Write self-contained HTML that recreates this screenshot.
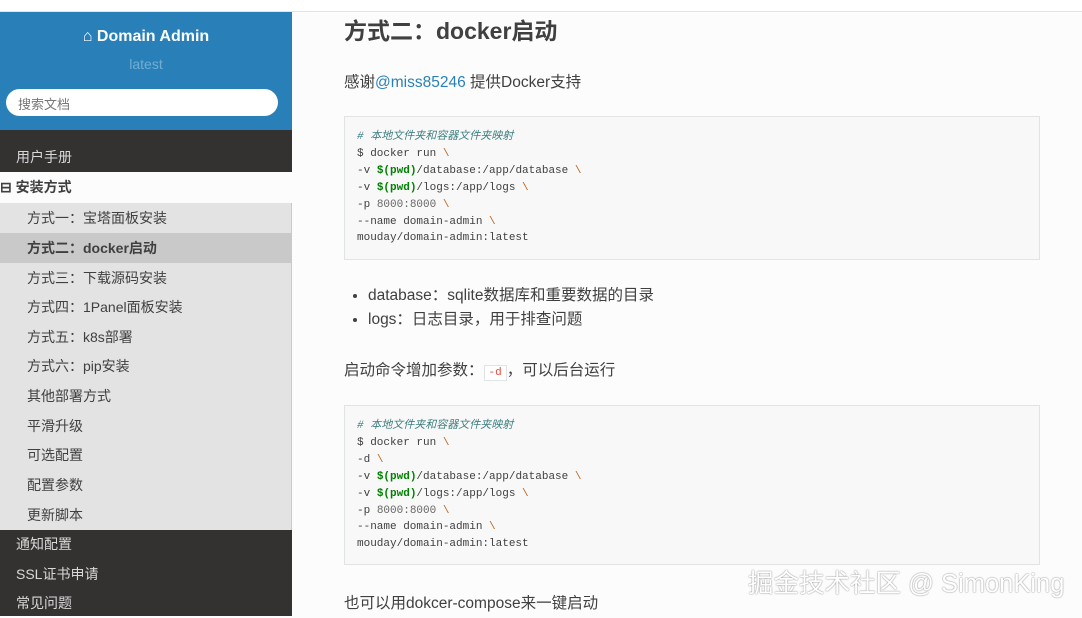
<!DOCTYPE html>
<html><head><meta charset="utf-8"><style>
*{margin:0;padding:0;box-sizing:border-box}
body{width:1082px;height:616px;overflow:hidden;background:#fcfcfc;font-family:"Liberation Sans","Noto Sans CJK SC",sans-serif;color:#404040;position:relative}
.top{position:absolute;left:0;top:0;width:1082px;height:12px;background:#fff;border-bottom:1px solid #e4e4e4}
.side{position:absolute;left:0;top:12px;width:292px;height:604px;background:#343131}
.blue{position:absolute;left:0;top:0;width:292px;height:118px;background:#2980b9;text-align:center}
.title{position:absolute;top:16px;width:100%;color:#fcfcfc;font-weight:bold;font-size:16px}
.ver{position:absolute;top:44px;width:100%;color:rgba(255,255,255,.35);font-size:14px}
.search{position:absolute;left:6px;top:77px;width:272px;height:27px;background:#fff;border-radius:14px;font-size:13px;color:#777;padding:5px 12px;text-align:left}
.it{position:absolute;left:0;width:292px;font-size:14px;padding-left:16px;line-height:30px;height:30px}
.d{color:#d9d9d9}
.sub{position:absolute;left:0;top:191px;width:292px;height:327px;background:#e3e3e3;border-right:1px solid #c9c9c9}
.s{position:absolute;left:0;width:291px;height:30px;line-height:30px;padding-left:27px;font-size:14px;color:#404040}
.main{position:absolute;left:292px;top:12px;width:790px;height:604px;background:#fcfcfc}
h2{position:absolute;left:344px;top:12px;font-size:23px;font-weight:bold;color:#404040}
p{position:absolute;left:344px;font-size:15.5px}
a{color:#2980b9;text-decoration:none}
pre{position:absolute;left:344px;width:696px;background:#f8f8f8;border:1px solid #e1e4e5;font-family:"Liberation Mono","Noto Sans CJK SC",monospace;font-size:11px;line-height:16.9px;padding:12px 12px;color:#404040}
.c{color:#408080;font-style:italic}.g{color:#008000;font-weight:bold}.b{color:#bb6622}.n{color:#666}
ul{position:absolute;left:368px;top:284px;font-size:15.5px;line-height:24px}
code{font-family:"Liberation Mono",monospace;font-size:11px;color:#e74c3c;background:#fff;border:1px solid #e1e4e5;padding:1px 4px}
.wm{position:absolute;left:748px;top:563px;font-size:25.5px;color:#fff;text-shadow:0 0 1.5px #666;white-space:nowrap}
</style></head><body>
<div class="top"></div>
<div class="main"></div>
<div class="side">
 <div class="blue"><div class="title">⌂ Domain Admin</div><div class="ver">latest</div><div class="search">搜索文档</div></div>
 <div class="it d" style="top:130px">用户手册</div>
 <div class="it" style="top:160px;background:#fcfcfc;color:#404040;font-weight:bold;padding-left:0;height:31px">⊟ 安装方式</div>
 <div class="sub">
  <div class="s" style="top:0">方式一：宝塔面板安装</div>
  <div class="s" style="top:30px;background:#c9c9c9;font-weight:bold">方式二：docker启动</div>
  <div class="s" style="top:60px">方式三：下载源码安装</div>
  <div class="s" style="top:89px">方式四：1Panel面板安装</div>
  <div class="s" style="top:119px">方式五：k8s部署</div>
  <div class="s" style="top:148px">方式六：pip安装</div>
  <div class="s" style="top:178px">其他部署方式</div>
  <div class="s" style="top:208px">平滑升级</div>
  <div class="s" style="top:237px">可选配置</div>
  <div class="s" style="top:267px">配置参数</div>
  <div class="s" style="top:297px">更新脚本</div>
 </div>
 <div class="it d" style="top:517px">通知配置</div>
 <div class="it d" style="top:547px">SSL证书申请</div>
 <div class="it d" style="top:576px">常见问题</div>
</div>
<h2>方式二：docker启动</h2>
<p style="top:70px">感谢<a>@miss85246</a> 提供Docker支持</p>
<pre style="top:116px;height:144px"><span class="c"># 本地文件夹和容器文件夹映射</span>
$ docker run <span class="b">\</span>
-v <span class="g">$(pwd)</span>/database:/app/database <span class="b">\</span>
-v <span class="g">$(pwd)</span>/logs:/app/logs <span class="b">\</span>
-p <span class="n">8000:8000</span> <span class="b">\</span>
--name domain-admin <span class="b">\</span>
mouday/domain-admin:latest</pre>
<ul><li>database：sqlite数据库和重要数据的目录</li><li>logs：日志目录，用于排查问题</li></ul>
<p style="top:358px">启动命令增加参数：<code>-d</code>，可以后台运行</p>
<pre style="top:405px;height:160px"><span class="c"># 本地文件夹和容器文件夹映射</span>
$ docker run <span class="b">\</span>
-d <span class="b">\</span>
-v <span class="g">$(pwd)</span>/database:/app/database <span class="b">\</span>
-v <span class="g">$(pwd)</span>/logs:/app/logs <span class="b">\</span>
-p <span class="n">8000:8000</span> <span class="b">\</span>
--name domain-admin <span class="b">\</span>
mouday/domain-admin:latest</pre>
<p style="top:591px">也可以用dokcer-compose来一键启动</p>
<div class="wm">掘金技术社区 @ SimonKing</div>
</body></html>
